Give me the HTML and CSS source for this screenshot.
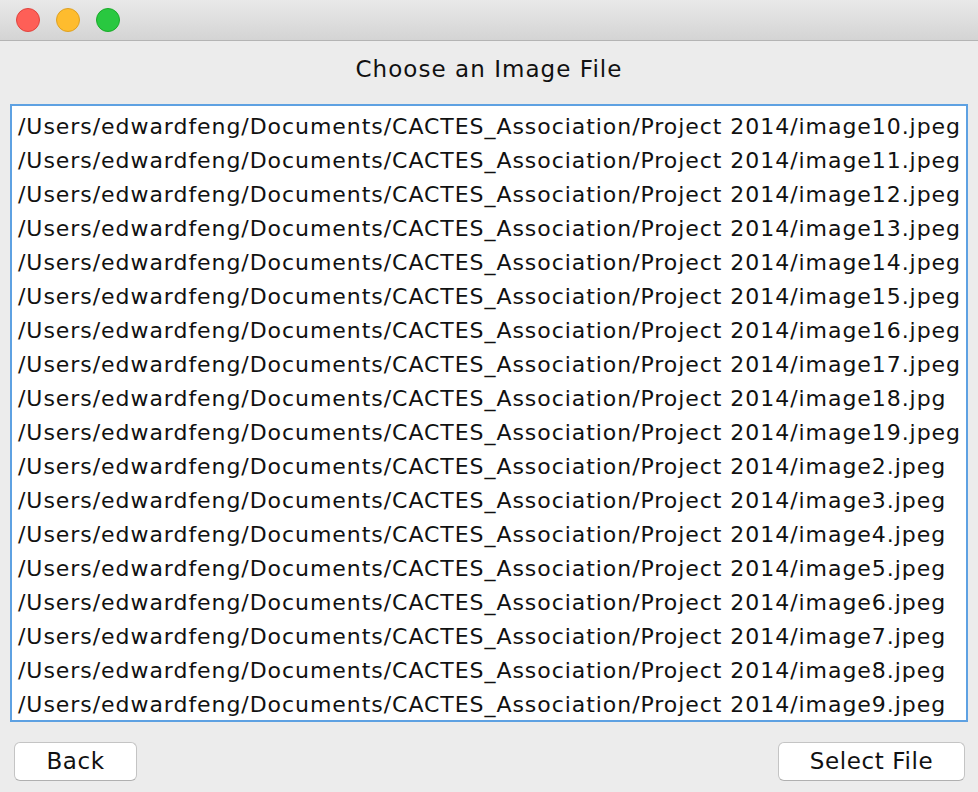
FILE: index.html
```html
<!DOCTYPE html>
<html>
<head>
<meta charset="utf-8">
<link rel="stylesheet" href="styles.css">
</head>
<body>
<div class="window">
  <div class="titlebar">
    <span class="light red"></span>
    <span class="light yellow"></span>
    <span class="light green"></span>
  </div>
  <div class="content">
    <div class="heading">Choose an Image File</div>
    <div class="list">
      <div class="row">/Users/edwardfeng/Documents/CACTES_Association/Project 2014/image10.jpeg</div>
      <div class="row">/Users/edwardfeng/Documents/CACTES_Association/Project 2014/image11.jpeg</div>
      <div class="row">/Users/edwardfeng/Documents/CACTES_Association/Project 2014/image12.jpeg</div>
      <div class="row">/Users/edwardfeng/Documents/CACTES_Association/Project 2014/image13.jpeg</div>
      <div class="row">/Users/edwardfeng/Documents/CACTES_Association/Project 2014/image14.jpeg</div>
      <div class="row">/Users/edwardfeng/Documents/CACTES_Association/Project 2014/image15.jpeg</div>
      <div class="row">/Users/edwardfeng/Documents/CACTES_Association/Project 2014/image16.jpeg</div>
      <div class="row">/Users/edwardfeng/Documents/CACTES_Association/Project 2014/image17.jpeg</div>
      <div class="row">/Users/edwardfeng/Documents/CACTES_Association/Project 2014/image18.jpg</div>
      <div class="row">/Users/edwardfeng/Documents/CACTES_Association/Project 2014/image19.jpeg</div>
      <div class="row">/Users/edwardfeng/Documents/CACTES_Association/Project 2014/image2.jpeg</div>
      <div class="row">/Users/edwardfeng/Documents/CACTES_Association/Project 2014/image3.jpeg</div>
      <div class="row">/Users/edwardfeng/Documents/CACTES_Association/Project 2014/image4.jpeg</div>
      <div class="row">/Users/edwardfeng/Documents/CACTES_Association/Project 2014/image5.jpeg</div>
      <div class="row">/Users/edwardfeng/Documents/CACTES_Association/Project 2014/image6.jpeg</div>
      <div class="row">/Users/edwardfeng/Documents/CACTES_Association/Project 2014/image7.jpeg</div>
      <div class="row">/Users/edwardfeng/Documents/CACTES_Association/Project 2014/image8.jpeg</div>
      <div class="row">/Users/edwardfeng/Documents/CACTES_Association/Project 2014/image9.jpeg</div>
    </div>
    <div class="buttons">
      <button class="btn back">Back</button>
      <button class="btn select">Select File</button>
    </div>
  </div>
</div>
</body>
</html>
```
FILE: styles.css
```css
html, body {
  margin: 0;
  padding: 0;
  width: 978px;
  height: 792px;
  overflow: hidden;
  background: #ececec;
  font-family: "DejaVu Sans", "Liberation Sans", sans-serif;
  color: #111;
}
.window {
  display: flex;
  flex-direction: column;
  height: 792px;
}
.titlebar {
  height: 41px;
  box-sizing: border-box;
  background: linear-gradient(#e9e9e9, #d4d4d4);
  border-bottom: 1px solid #b4b4b4;
  display: flex;
  align-items: center;
  gap: 16px;
  padding-left: 16px;
}
.light {
  width: 24px;
  height: 24px;
  border-radius: 50%;
  box-sizing: border-box;
}
.red { background: #fe5f57; border: 1px solid #e0443e; }
.yellow { background: #febc2e; border: 1px solid #dea123; }
.green { background: #29c840; border: 1px solid #1aab29; }
.content {
  display: flex;
  flex-direction: column;
  padding: 0 10px;
}
.heading {
  height: 63px;
  display: flex;
  align-items: center;
  justify-content: center;
  font-size: 23px;
  letter-spacing: 1.05px;
  padding-bottom: 7px;
  box-sizing: border-box;
}
.list {
  background: #fff;
  border: 2px solid #5ea1e2;
  height: 618px;
  box-sizing: border-box;
  padding: 4px 6px;
  overflow: hidden;
}
.row {
  height: 34px;
  line-height: 34px;
  font-size: 22px;
  letter-spacing: 0.95px;
  white-space: nowrap;
  color: #111;
}
.buttons {
  display: flex;
  justify-content: space-between;
  padding: 20px 3px 0 4px;
}
.btn {
  height: 39px;
  background: #fff;
  border: 1px solid #c4c4c4;
  border-bottom-color: #b0b0b0;
  border-radius: 6px;
  font-family: "DejaVu Sans", "Liberation Sans", sans-serif;
  font-size: 23px;
  letter-spacing: 0.6px;
  color: #111;
  padding: 0 0 2px 0;
}
.back { width: 123px; }
.select { width: 187px; }
```
